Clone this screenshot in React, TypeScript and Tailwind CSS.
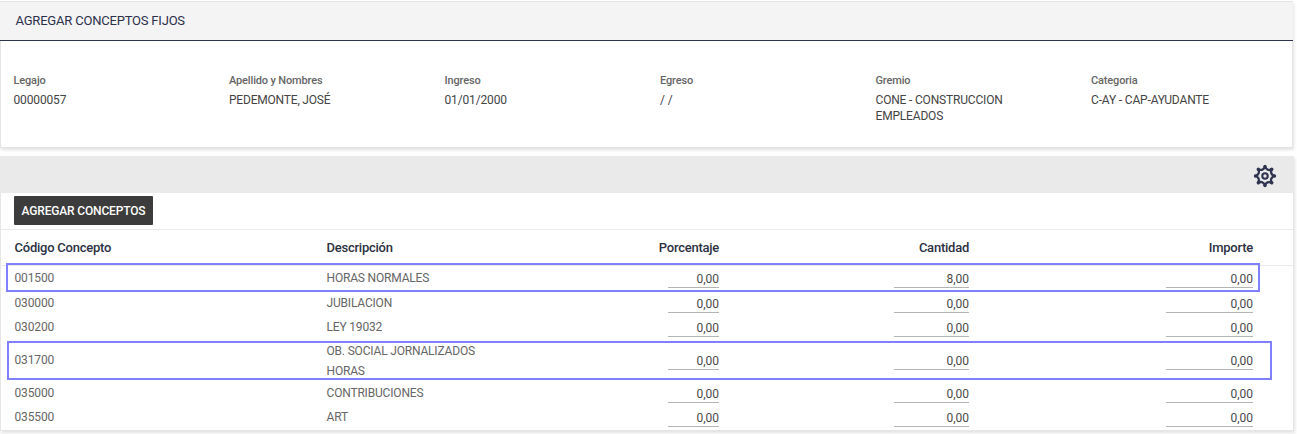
import React from "react";

const fields = [
  { label: "Legajo", value: "00000057", spacing: "tracking-[-0.15px]" },
  { label: "Apellido y Nombres", value: "PEDEMONTE, JOSÉ", spacing: "tracking-[-0.2px]" },
  { label: "Ingreso", value: "01/01/2000", spacing: "tracking-[-0.15px]" },
  { label: "Egreso", value: "/ /", spacing: "tracking-[-0.1px]" },
  { label: "Gremio", value: "CONE - CONSTRUCCION EMPLEADOS", spacing: "tracking-[-0.18px]" },
  { label: "Categoria", value: "C-AY - CAP-AYUDANTE", spacing: "tracking-[-0.16px]" },
];

type Row = { code: string; name: string; qty: string; height: string; nameOffset?: string; mark?: string };

const rows: Row[] = [
  { code: "001500", name: "HORAS NORMALES", qty: "8,00", height: "h-[25px] pb-px", mark: "-top-[3px] left-[5px] h-[29px] w-[1254px]" },
  { code: "030000", name: "JUBILACION", qty: "0,00", height: "h-6" },
  { code: "030200", name: "LEY 19032", qty: "0,00", height: "h-6" },
  { code: "031700", name: "OB. SOCIAL JORNALIZADOS HORAS", qty: "0,00", height: "h-[42px]", nameOffset: "pt-px", mark: "top-[2px] left-[6px] h-[39px] w-[1265px]" },
  { code: "035000", name: "CONTRIBUCIONES", qty: "0,00", height: "h-6" },
  { code: "035500", name: "ART", qty: "0,00", height: "h-6" },
];

const columns = "grid grid-cols-[312px_292px_101px_250px_284px]";

const toothAngles = [0, 45, 90, 135, 180, 225, 270, 315];

function Gear() {
  return (
    <svg viewBox="0 0 24 24" className="size-6" fill="none" stroke="#2f3550">
      <circle cx="12" cy="12" r="2.7" strokeWidth="2.1" />
      {toothAngles.map((angle) => (
        <g key={angle} transform={`rotate(${angle} 12 12)`}>
          <path d="M12 2.4 C11.5 4.4 10.8 5.1 9.5 5.6 C8.2 6.1 7 6.1 5.21 5.21" strokeWidth="2.3" />
          <circle cx="12" cy="2.5" r="1.7" fill="#2f3550" stroke="none" />
        </g>
      ))}
    </svg>
  );
}

function Amount({ value, width }: { value: string; width: string }) {
  return (
    <div className="flex justify-end pt-[2px]">
      <span className={`${width} h-[17px] border-b border-[#b4b4b4] text-right leading-[17px] text-[#4a4a4a]`}>{value}</span>
    </div>
  );
}

export default function App() {
  return (
    <main className="h-[434px] w-[1297px] overflow-hidden bg-white pt-px font-['Roboto',sans-serif] text-xs">
      <section className="h-[147px] w-[1293px] border border-[#e4e4e4] bg-white shadow-[1px_2px_3px_#e2e2e2]">
        <h1 className="-mx-px flex h-[39px] items-center border-b border-[#2e3350] bg-[#f4f4f4] pl-[15.5px] text-[13px] font-normal tracking-[-0.2px] text-[#2b304b]">
          AGREGAR CONCEPTOS FIJOS
        </h1>
        <dl className="grid grid-cols-[repeat(6,215.5px)] pt-8 pl-[12.5px]">
          {fields.map((f) => (
            <div key={f.label} className="pr-16">
              <dt className="text-[11px] leading-4 font-medium tracking-[-0.15px] text-[#666]">{f.label}</dt>
              <dd className={`mt-[3px] leading-4 text-[#444] ${f.spacing}`}>{f.value}</dd>
            </div>
          ))}
        </dl>
      </section>

      <section className="mt-2 h-[275px] w-[1294px] border-x border-b border-[#e6e6e6] bg-white shadow-[1px_2px_3px_#e2e2e2]">
        <div className="-mx-px flex h-[37px] items-center justify-end bg-[#eaeaea] pt-[3px] pr-[17.5px]">
          <Gear />
        </div>
        <div className="flex h-[37px] border-b border-[#e9e9e9] pt-[3px] pl-[13px]">
          <button className="h-[29px] w-[139px] rounded-[1px] bg-[#3c3c3c] text-[12px] font-medium tracking-[-0.16px] text-white">AGREGAR CONCEPTOS</button>
        </div>
        <div className={`${columns} h-9 items-center border-b border-[#e9e9e9] pl-[13px] text-[13px] font-medium tracking-[-0.24px] text-[#2d3142]`}>
          <span className="pl-[0.5px]">Código Concepto</span>
          <span className="pl-[0.5px]">Descripción</span>
          <span className="text-right">Porcentaje</span>
          <span className="text-right">Cantidad</span>
          <span className="text-right">Importe</span>
        </div>
        {rows.map((r) => (
          <div key={r.code} className={`${columns} ${r.height} relative items-center pl-[13px] text-[#666]`}>
            <span className="pl-[0.5px] tracking-[-0.12px]">{r.code}</span>
            <span className={`w-44 pl-[0.5px] leading-5 tracking-[-0.18px] ${r.nameOffset ?? ""}`}>{r.name}</span>
            <Amount value="0,00" width="w-[51px]" />
            <Amount value={r.qty} width="w-[75px]" />
            <Amount value="0,00" width="w-[87px]" />
            {r.mark && <div className={`absolute border-2 border-[#8080ff] ${r.mark}`} />}
          </div>
        ))}
      </section>
    </main>
  );
}
